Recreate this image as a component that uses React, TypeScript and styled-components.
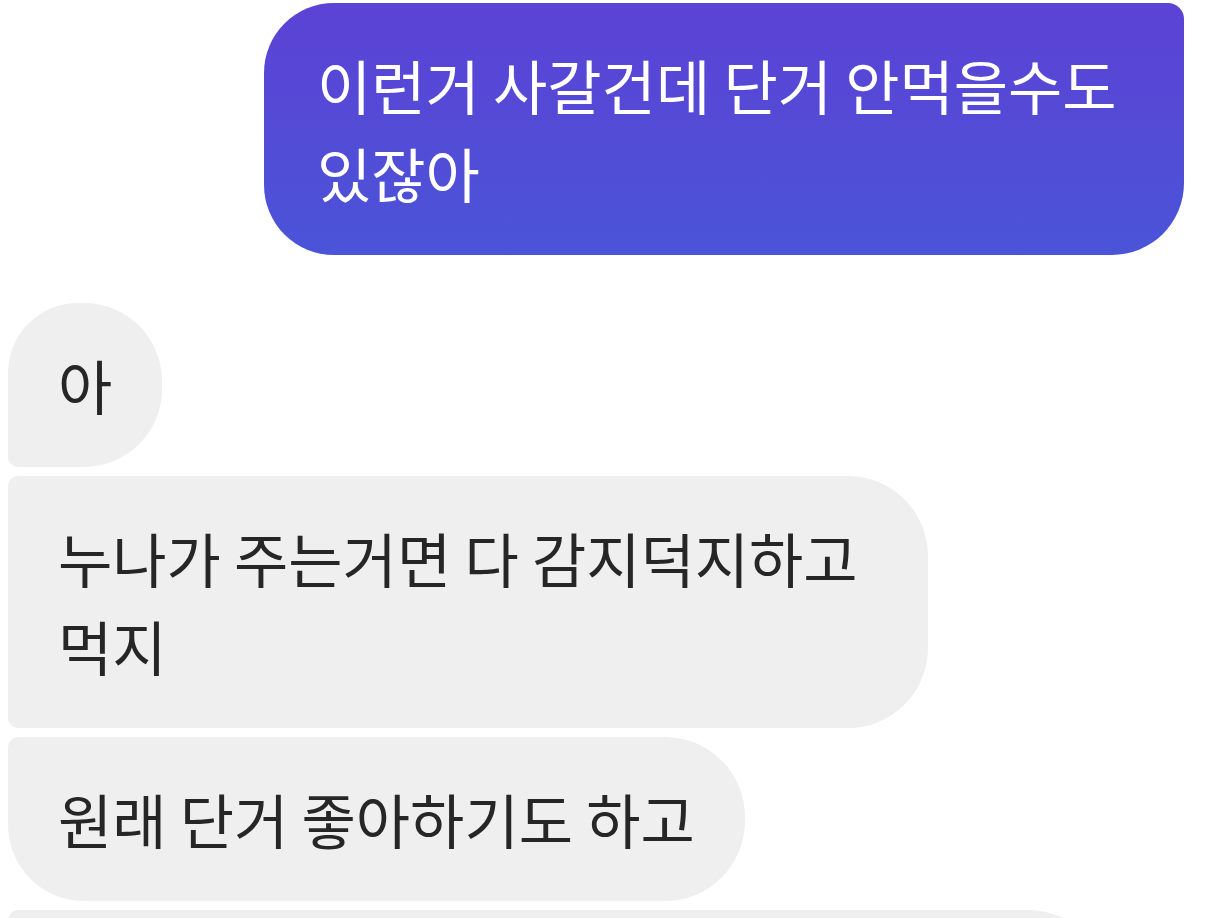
import React from "react";
import styled, { createGlobalStyle } from "styled-components";

const GlobalStyle = createGlobalStyle`
  html, body {
    margin: 0;
    padding: 0;
    background: #ffffff;
    overflow: hidden;
  }
  body {
    font-family: "Noto Sans CJK KR", "Noto Sans", sans-serif;
  }
`;

type Corners = {
  $tl: number;
  $tr: number;
  $br: number;
  $bl: number;
};

const Thread = styled.div`
  display: flex;
  flex-direction: column;
  padding: 3px 32px 0 8px;
`;

const SentRow = styled.div`
  display: flex;
  justify-content: flex-end;
  margin-bottom: 48px;
`;

const ReceivedGroup = styled.div`
  display: flex;
  flex-direction: column;
  align-items: flex-start;
  gap: 9px;
`;

const Bubble = styled.div<Corners & { $sent?: boolean; $wide?: boolean; $width?: number }>`
  box-sizing: border-box;
  width: ${(p) => (p.$width ? `${p.$width}px` : p.$wide ? "920px" : "fit-content")};
  padding: 38px 50px;
  font-size: 59px;
  line-height: 88px;
  font-weight: 400;
  white-space: nowrap;
  color: ${(p) => (p.$sent ? "#ffffff" : "#262626")};
  background: ${(p) =>
    p.$sent ? "linear-gradient(180deg, #5c42d5 0%, #4a54d8 100%)" : "#efefef"};
  border-radius: ${(p) => `${p.$tl}px ${p.$tr}px ${p.$br}px ${p.$bl}px`};
`;

const SentBubble = styled(Bubble)`
  padding-left: 53px;
`;

const App: React.FC = () => {
  return (
    <>
      <GlobalStyle />
      <Thread>
        <SentRow>
          <SentBubble $sent $wide $tl={70} $tr={16} $br={72} $bl={70}>
            이런거 사갈건데 단거 안먹을수도
            <br />
            있잖아
          </SentBubble>
        </SentRow>

        <ReceivedGroup>
          <Bubble $tl={70} $tr={78} $br={78} $bl={10}>
            아
          </Bubble>
          <Bubble $wide $tl={10} $tr={80} $br={80} $bl={10}>
            누나가 주는거면 다 감지덕지하고
            <br />
            먹지
          </Bubble>
          <Bubble $tl={10} $tr={80} $br={80} $bl={76}>
            원래 단거 좋아하기도 하고
          </Bubble>
          <Bubble $width={1100} $tl={10} $tr={80} $br={80} $bl={10}>
            &nbsp;
          </Bubble>
        </ReceivedGroup>
      </Thread>
    </>
  );
};

export default App;
